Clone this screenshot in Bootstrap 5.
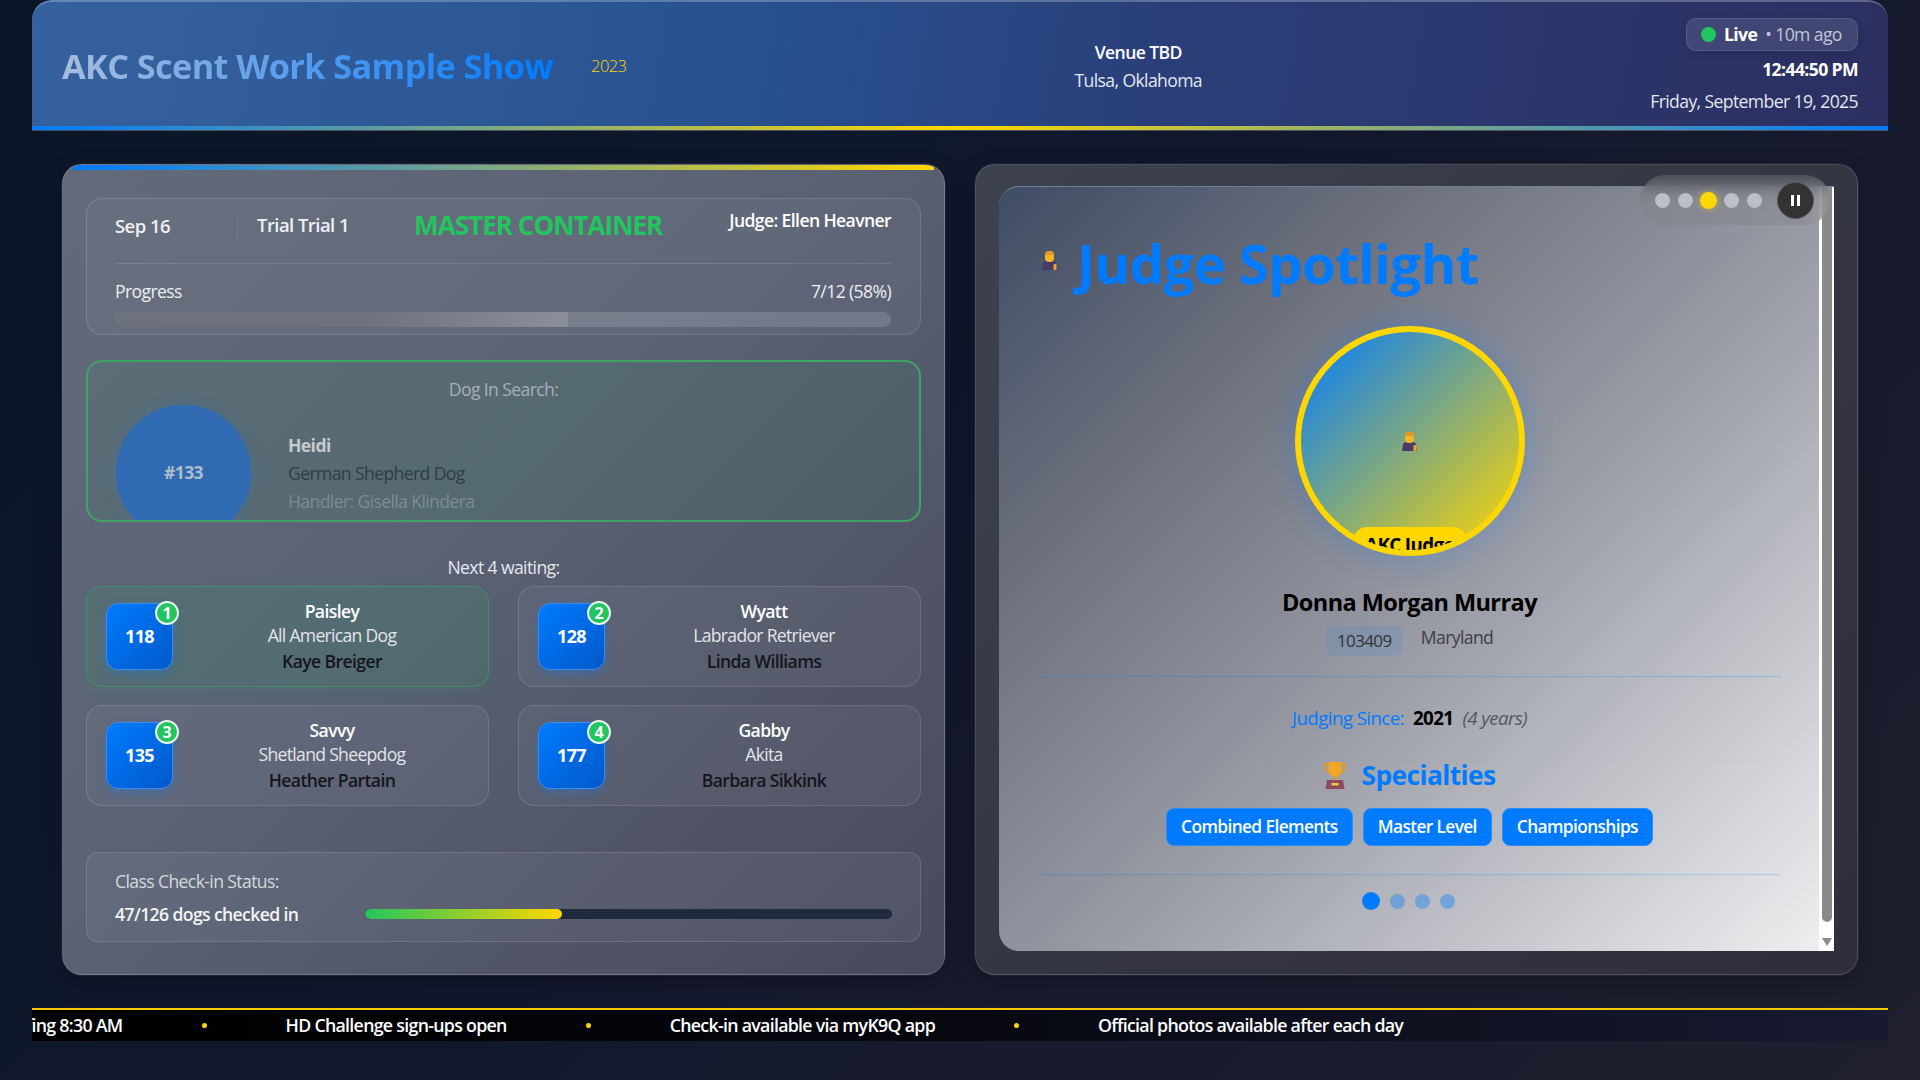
<!DOCTYPE html>
<html lang="en"><head><meta charset="utf-8"><title>AKC Scent Work Sample Show</title>
<link href="https://cdn.jsdelivr.net/npm/bootstrap@5.3.0/dist/css/bootstrap.min.css" rel="stylesheet">
<style>
html,body{height:100%;overflow:hidden}
body{background:linear-gradient(135deg,#0a1628 0%,#12182c 50%,#1f1f2e 100%);font-family:"Open Sans","Liberation Sans",sans-serif;color:#fff;font-size:17.6px;letter-spacing:-.035em;line-height:1.3}
.shell{padding:0 32px;height:1080px}
.topbar{height:130px;padding:0 30px;border-radius:20px 20px 0 0;border-top:2px solid rgba(255,255,255,.25);position:relative;background:linear-gradient(100deg,#35629f 0%,#28508f 40%,#2a3f7a 60%,#2c2f60 100%);box-shadow:0 1px 0 rgba(255,255,255,.25)}
.topbar::after{content:"";position:absolute;left:0;right:0;bottom:0;height:4px;background:linear-gradient(90deg,#007bff,#ffd700 50%,#007bff)}
.show-title{font-size:34.3px;font-weight:700;background:linear-gradient(90deg,#a8bcdc,#007bff);-webkit-background-clip:text;background-clip:text;color:transparent;margin:0}
.show-year{color:#ffd700;font-size:16.5px;margin-left:38px;font-weight:300}
.venue-a{font-weight:600;line-height:28px}.venue-b{color:#e4e8f0;line-height:28px}
.live-pill{height:33px;width:172px;background:rgba(255,255,255,.1);border:1px solid rgba(255,255,255,.12);border-radius:10px;padding:0 14px;box-shadow:0 4px 10px rgba(0,0,0,.12);margin-top:-2px}
.live-dot{width:15px;height:15px;border-radius:50%;background:#22c55e;margin-right:8px}
.live-t{font-weight:700}.live-s{color:#c0c6d8;margin-left:8px}
.clock{font-weight:700;margin-top:6px;line-height:24px}.day{color:#e3e6ee;margin-top:8px;line-height:24px}
.boards{display:grid;grid-template-columns:1fr 1fr;gap:30px;padding:0 30px;margin-top:34px;height:811px}
.pane{border:1px solid rgba(255,255,255,.13);border-radius:20px;position:relative;overflow:hidden;box-shadow:0 0 0 1px rgba(255,255,255,.06),0 8px 24px rgba(0,0,0,.2)}
.pane-l{padding:33px 23px;background:linear-gradient(135deg,#636a7a 0%,#5a6274 45%,#484a5b 100%)}
.pane-l::before{content:"";position:absolute;left:10px;right:10px;top:0;height:5px;background:linear-gradient(90deg,#007bff,#ffd700)}
.pane-r{padding:21px 23px 23px;background:linear-gradient(135deg,#3d424f 0%,#33343f 60%,#2f2f3c 100%)}
.glass{background:rgba(255,255,255,.045);border:1px solid rgba(255,255,255,.13);border-radius:16px}
.trial-box{height:137px;padding:0 29px 0 28px}
.trial-top{height:65px;border-bottom:1px solid rgba(255,255,255,.13);padding-bottom:12px}
.t-date{width:123px;border-right:1px solid rgba(255,255,255,.1);height:27px;line-height:27px;font-weight:600;color:#eef0f4;font-size:18.5px;letter-spacing:-.03em}
.t-name{margin-left:19px;width:157px;font-weight:600;color:#eef0f4;font-size:18.5px;letter-spacing:-.03em}
.t-cont{color:#22c55e;font-size:26.2px;font-weight:700;width:250px;letter-spacing:-.04em;white-space:nowrap}
.t-judge{font-weight:600;margin-left:auto;margin-top:-10px}
.prog-row{margin-top:16px;color:#eceef2}
.bar-a{height:15px;border-radius:8px;background:rgba(255,255,255,.14);margin-top:9px}
.bar-a .progress-bar{background:linear-gradient(90deg,#6e727d 0%,#6e727d 55%,#8c8f9a 100%)}
.dog-box{height:162px;margin-top:25px;border:2px solid #3fa366;border-radius:16px;background:rgba(34,197,94,.07);position:relative;overflow:hidden;padding:0 28px}
.dog-lab{color:#a8aeb8;text-align:center;padding-top:15px;line-height:24px}
.dog-disc{width:135px;height:135px;border-radius:50%;background:#2f6ab2;color:#aebccb;font-weight:700;margin-top:4px;flex:none;box-shadow:0 0 14px rgba(0,123,255,.2)}
.dog-info{margin-left:37px;margin-top:30px;line-height:28px}
.dog-name{color:#c6cace;font-weight:700}.dog-breed{color:#303c47}.dog-hand{color:#7f8b92}
.next-lab{text-align:center;color:#e5e8ee;margin-top:34px;line-height:22px}
.wait-grid{display:grid;grid-template-columns:1fr 1fr;gap:18px 29px;margin-top:8px}
.wait{height:101px;padding:0 19px;position:relative;display:flex;align-items:center}
.wait-on{background:rgba(34,197,94,.1);border-color:rgba(53,170,100,.55);box-shadow:0 4px 14px rgba(34,197,94,.1)}
.wait-no{width:67px;height:67px;border-radius:12px;background:linear-gradient(135deg,#007bff,#0059c9);border:1px solid #3a8cf0;font-weight:700;font-size:18px;position:relative;flex:none;box-shadow:0 4px 10px rgba(0,123,255,.3)}
.wait-rank{position:absolute;top:-3px;right:-7px;width:24px;height:24px;border-radius:50%;background:#22c55e;border:2px solid #e8f5ec;font-size:16px;font-weight:700;line-height:1;letter-spacing:0}
.wait-info{flex:1;text-align:center;margin-left:22px}
.w-n{font-weight:600;line-height:24px}.w-b{color:#e2e4ea;line-height:24px;font-size:17.6px;letter-spacing:-.04em}.w-h{color:#14161c;font-weight:600;line-height:28px}
.check-box{height:90px;margin-top:46px;padding:0 28px;background:rgba(255,255,255,.05);border-radius:12px}
.ck-lab{color:#d5d8de;padding-top:15px;line-height:26px}
.ck-val{font-weight:600;width:250px;color:#f2f3f6;line-height:22px}
.ck-row{margin-top:9px}
.bar-b{height:10px;flex:1;background:#1f2a3c;border-radius:5px}
.bar-b .progress-bar{background:linear-gradient(90deg,#22c55e,#ffd700);border-radius:5px}
.spot{height:765px;border-radius:20px 0 0 20px;border-top:1px solid #6f8199;background:linear-gradient(135deg,#3f4c66 0%,#6c707c 25%,#9a9ca6 55%,#c9cacf 80%,#f0f0f2 100%);position:relative;overflow:hidden;padding:43px 53px 0 39px}
.sbar{position:absolute;top:0;right:0;bottom:0;width:15px;background:#fff}
.sbar-th{position:absolute;left:3px;right:2px;top:0;height:735px;background:#8a8a8a;border-radius:0 0 5px 5px}
.sbar-ar{position:absolute;left:3px;bottom:5px;border-left:5px solid transparent;border-right:5px solid transparent;border-top:8px solid #8a8a8a}
.spot-h{color:#007bff;font-size:54.5px;font-weight:700;line-height:66px;margin:0}
.spot-ic{margin:-6px 20px 0 4px;flex:none}
.disc-wrap{box-shadow:0 0 30px rgba(0,123,255,.3);border-radius:50%;width:230px;height:230px;margin:30px auto 0}
.judge-disc{width:230px;height:230px;border-radius:50%;border:6px solid #ffd700;background:linear-gradient(135deg,#007bff,#ffd700);position:relative;overflow:hidden}
.disc-tag{position:absolute;bottom:-19px;left:50%;transform:translateX(-50%);width:115px;height:42px;background:#ffd700;border-radius:15px;color:#000;font-weight:700;text-align:center;white-space:nowrap;padding-top:6px;font-size:18.8px}
.j-name{color:#000;font-weight:700;font-size:23.5px;text-align:center;margin-top:30px;line-height:32px;letter-spacing:-.025em}
.j-chip{width:77px;height:30px;background:rgba(0,123,255,.1);border-radius:8px;color:#333;margin-top:4px;line-height:30px;text-align:center;font-size:17px}
.j-st{color:#3d3f45;margin-left:18px;margin-top:4px;font-size:17.6px}
.rule{height:1px;background:rgba(0,123,255,.2);margin-top:20px;box-shadow:0 1px 0 rgba(0,123,255,.06)}
.since{margin-top:28px;line-height:26px;font-size:18.8px}
.since-a{color:#007bff}.since-b{color:#000;font-weight:700;margin:0 9px}.since-c{color:#55585f;font-style:italic}
.spec-h{margin-top:26px;color:#007bff;font-weight:700;font-size:26.4px;line-height:36px}
.spec-h svg{margin-right:16px}
.tag-btn{--bs-btn-font-size:17.3px;--bs-btn-font-weight:600;--bs-btn-bg:#007bff;--bs-btn-border-color:#2f8cf5;--bs-btn-padding-y:0;--bs-btn-padding-x:14px;--bs-btn-border-radius:8px;height:38px;line-height:36px;letter-spacing:-.035em}
.tag-row{margin-top:15px;gap:10px}
.rule2{margin-top:28px}
.pg-dots{margin-top:17px;gap:10px;transform:translateX(-1px)}
.pg{width:15px;height:15px;border-radius:50%;background:rgba(0,123,255,.38)}
.pg-on{width:18px;height:18px;background:#007bff}
.ctl{position:absolute;top:10px;right:27px;width:190px;height:50px;border-radius:25px;background:rgba(125,127,133,.3);-webkit-backdrop-filter:blur(8px);backdrop-filter:blur(8px);padding-left:15px;z-index:5}
.c-d{width:15px;height:15px;border-radius:50%;background:#bcbfc5;margin-right:8px;flex:none}
.c-on{width:17px;height:17px;background:#ffd700;box-shadow:0 0 6px rgba(255,215,0,.5);margin:0 7px 0 -1px}
.c-p{width:37px;height:37px;border-radius:50%;background:#333;border:1px solid #555;margin-left:7px;gap:3px;flex:none}
.c-p i{display:block;width:3px;height:11px;background:#fff}
.ticker{margin-top:33px;height:33px;border-top:2px solid #ffc800;background:linear-gradient(90deg,#000 0%,#05060d 45%,#171a30 100%);overflow:hidden;line-height:31px}
.tick-run{white-space:nowrap;transform:translateX(-38px);font-weight:600;font-size:17.8px;letter-spacing:-.04em}
.tick-dot{width:5px;height:5px;border-radius:50%;background:#ffd700;margin:0 79px;flex:none}
</style></head>
<body>
<div class="shell">
<header class="topbar d-flex align-items-center justify-content-between">
  <div class="d-flex align-items-center"><h1 class="show-title">AKC Scent Work Sample Show</h1><span class="show-year">2023</span></div>
  <div class="text-center"><div class="venue-a">Venue TBD</div><div class="venue-b">Tulsa, Oklahoma</div></div>
  <div class="d-flex flex-column align-items-end">
    <div class="live-pill d-flex align-items-center"><span class="live-dot"></span><span class="live-t">Live</span><span class="live-s">• 10m ago</span></div>
    <div class="clock">12:44:50 PM</div><div class="day">Friday, September 19, 2025</div>
  </div>
</header>
<main class="boards">
  <section class="pane pane-l">
    <div class="glass trial-box">
      <div class="trial-top d-flex align-items-center">
        <div class="t-date">Sep 16</div><div class="t-name">Trial Trial 1</div><div class="t-cont">MASTER CONTAINER</div><div class="t-judge">Judge: Ellen Heavner</div>
      </div>
      <div class="prog-row d-flex justify-content-between"><span>Progress</span><span>7/12 (58%)</span></div>
      <div class="progress bar-a"><div class="progress-bar" style="width:58.4%"></div></div>
    </div>
    <div class="dog-box">
      <div class="dog-lab">Dog In Search:</div>
      <div class="d-flex">
        <div class="dog-disc d-flex align-items-center justify-content-center">#133</div>
        <div class="dog-info"><div class="dog-name">Heidi</div><div class="dog-breed">German Shepherd Dog</div><div class="dog-hand">Handler: Gisella Klindera</div></div>
      </div>
    </div>
    <div class="next-lab">Next 4 waiting:</div>
    <div class="wait-grid">
      <div class="glass wait wait-on"><div class="wait-no d-flex align-items-center justify-content-center">118<span class="wait-rank d-flex align-items-center justify-content-center">1</span></div><div class="wait-info"><div class="w-n">Paisley</div><div class="w-b">All American Dog</div><div class="w-h">Kaye Breiger</div></div></div>
      <div class="glass wait"><div class="wait-no d-flex align-items-center justify-content-center">128<span class="wait-rank d-flex align-items-center justify-content-center">2</span></div><div class="wait-info"><div class="w-n">Wyatt</div><div class="w-b">Labrador Retriever</div><div class="w-h">Linda Williams</div></div></div>
      <div class="glass wait"><div class="wait-no d-flex align-items-center justify-content-center">135<span class="wait-rank d-flex align-items-center justify-content-center">3</span></div><div class="wait-info"><div class="w-n">Savvy</div><div class="w-b">Shetland Sheepdog</div><div class="w-h">Heather Partain</div></div></div>
      <div class="glass wait"><div class="wait-no d-flex align-items-center justify-content-center">177<span class="wait-rank d-flex align-items-center justify-content-center">4</span></div><div class="wait-info"><div class="w-n">Gabby</div><div class="w-b">Akita</div><div class="w-h">Barbara Sikkink</div></div></div>
    </div>
    <div class="glass check-box">
      <div class="ck-lab">Class Check-in Status:</div>
      <div class="ck-row d-flex align-items-center"><div class="ck-val">47/126 dogs checked in</div><div class="progress bar-b"><div class="progress-bar" style="width:37.3%"></div></div></div>
    </div>
  </section>
  <section class="pane pane-r">
    <div class="ctl d-flex align-items-center"><span class="c-d"></span><span class="c-d"></span><span class="c-d c-on"></span><span class="c-d"></span><span class="c-d"></span><span class="c-p d-flex align-items-center justify-content-center"><i></i><i></i></span></div>
    <div class="spot">
      <div class="sbar"><div class="sbar-th"></div><div class="sbar-ar"></div></div>
      <div class="d-flex align-items-center">
        <svg class="spot-ic" width="15" height="19" viewBox="0 0 15 19"><path d="M0 19l1-7q1-2 4-2h5q3 0 4 2l1 7z" fill="#4a3a66"/><rect x="3" y="0" width="9" height="11" rx="4" fill="#f5b52a"/><path d="M3 4q0-4 4.500-4T12 4z" fill="#e09a1e"/><rect x="11.500" y="13" width="3" height="6" rx="1" fill="#e8a62a"/></svg>
        <h2 class="spot-h">Judge Spotlight</h2>
      </div>
      <div class="disc-wrap"><div class="judge-disc d-flex align-items-center justify-content-center">
        <svg width="15" height="19" viewBox="0 0 15 19"><path d="M0 19l1-7q1-2 4-2h5q3 0 4 2l1 7z" fill="#4a3a66"/><rect x="3" y="0" width="9" height="11" rx="4" fill="#f5b52a"/><path d="M3 4q0-4 4.500-4T12 4z" fill="#e09a1e"/><rect x="11.500" y="13" width="3" height="6" rx="1" fill="#e8a62a"/></svg>
        <div class="disc-tag">AKC Judge</div>
      </div></div>
      <div class="j-name">Donna Morgan Murray</div>
      <div class="d-flex justify-content-center mt-1"><div class="j-chip">103409</div><div class="j-st">Maryland</div></div>
      <div class="rule"></div>
      <div class="since text-center"><span class="since-a">Judging Since:</span><span class="since-b">2021</span><span class="since-c">(4 years)</span></div>
      <div class="spec-h d-flex align-items-center justify-content-center">
        <svg width="22" height="28" viewBox="0 0 22 28"><path d="M4.500 1h13v8a6.500 7 0 0 1-13 0z" fill="#f2a626"/><path d="M4.500 3H1c0 5 2 8 4.500 9M17.500 3H21c0 5-2 8-4.500 9" fill="none" stroke="#e89a20" stroke-width="1.800"/><rect x="9.500" y="15" width="3" height="4" fill="#e89a20"/><path d="M1.500 28l1.500-9h16l1.500 9z" fill="#8d4a5c"/><rect x="7.500" y="22" width="7" height="2.500" fill="#f4c54a"/></svg>
        Specialties</div>
      <div class="tag-row d-flex justify-content-center"><button class="btn btn-primary tag-btn">Combined Elements</button><button class="btn btn-primary tag-btn">Master Level</button><button class="btn btn-primary tag-btn">Championships</button></div>
      <div class="rule rule2"></div>
      <div class="pg-dots d-flex justify-content-center align-items-center"><span class="pg pg-on"></span><span class="pg"></span><span class="pg"></span><span class="pg"></span></div>
    </div>
  </section>
</main>
<footer class="ticker"><div class="tick-run d-flex align-items-center"><span>Briefing 8:30 AM</span><span class="tick-dot"></span><span>HD Challenge sign-ups open</span><span class="tick-dot"></span><span>Check-in available via myK9Q app</span><span class="tick-dot"></span><span>Official photos available after each day</span></div></footer>
</div>
</body></html>
